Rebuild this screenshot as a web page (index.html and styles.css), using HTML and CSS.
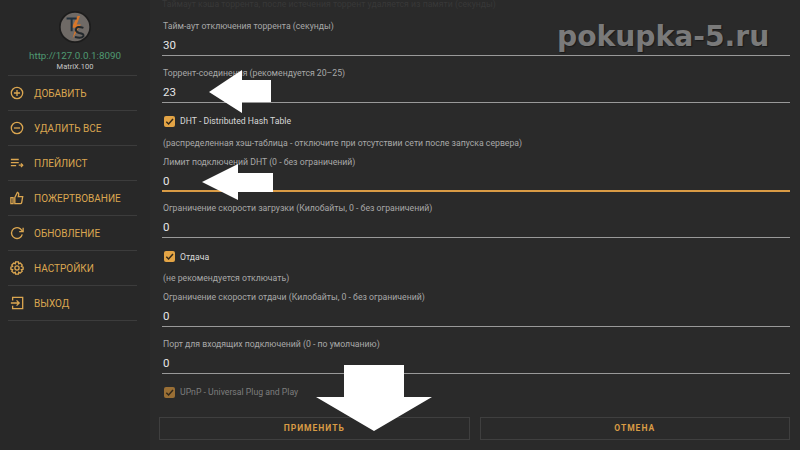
FILE: index.html
```html
<!DOCTYPE html>
<html lang="en">
<head>
    <meta charset="UTF-8">
    <meta name="viewport" content="width=device-width, initial-scale=1.0">
    <title>TorrServe</title>
    <link rel="stylesheet" href="styles.css">
</head>
<body>
    <div class="app">
        <div class="sidebar">
            <div class="logo">
                <svg width="32" height="32" viewBox="0 0 38 38">
                    <circle cx="19" cy="19" r="18" fill="#6f6a66" stroke="#1c1c1c" stroke-width="2"/>
                    <path d="M22 6 L15 20 L20 20 L16 33 L26 16 L21 16 L25 6 Z" fill="#d9772a"/>
                    <path d="M9 9 H21 M15 9 V24" stroke="#22303c" stroke-width="2.4" fill="none"/>
                    <path d="M29 20 Q21 17 20 22 Q20 25 24 26 Q30 27 29 30 Q27 33 19 31" stroke="#22282c" stroke-width="2.4" fill="none"/>
                </svg>
            </div>
            <div class="host">http://127.0.0.1:8090</div>
            <div class="version">MatriX.100</div>
            <div class="menu">
                <div class="menu-item">
                    <svg class="icon" viewBox="0 0 16 16"><circle cx="8" cy="8" r="6.5"/><path d="M8 4.5V11.5M4.5 8H11.5"/></svg>
                    <span>ДОБАВИТЬ</span>
                </div>
                <div class="menu-item">
                    <svg class="icon" viewBox="0 0 16 16"><circle cx="8" cy="8" r="6.5"/><path d="M4.5 8H11.5"/></svg>
                    <span>УДАЛИТЬ ВСЕ</span>
                </div>
                <div class="menu-item">
                    <svg class="icon" viewBox="0 0 16 16"><path d="M1 4H10M1 7.5H10M1 11H7M10 10.5H14.5"/><path d="M12.5 8.5L14.5 10.5L12.5 12.5"/></svg>
                    <span>ПЛЕЙЛИСТ</span>
                </div>
                <div class="menu-item">
                    <svg class="icon" viewBox="0 0 16 16"><path d="M1 7.5H3.5V14.5H1Z"/><path d="M5.5 7.5L8.5 1.5Q10.3 1.8 10 4L9.5 6.5H14.5L13.3 13.5Q13 14.5 12 14.5H5.5Z"/></svg>
                    <span>ПОЖЕРТВОВАНИЕ</span>
                </div>
                <div class="menu-item">
                    <svg class="icon" viewBox="0 0 16 16"><path d="M14 9.5A6.2 6.2 0 1 1 11.5 3L14.5 6"/><path d="M15 2V6.5H10.5"/></svg>
                    <span>ОБНОВЛЕНИЕ</span>
                </div>
                <div class="menu-item">
                    <svg class="icon" viewBox="0 0 16 16"><circle cx="8" cy="8" r="2.4"/><path d="M6.4 1H9.6L10 3.2L11.8 2.3L14 4.6L13 6.3L15 7V9.3L13 9.9L14 11.6L11.8 13.8L10 12.9L9.6 15H6.4L6 12.9L4.2 13.8L2 11.6L3 9.9L1 9.3V7L3 6.3L2 4.6L4.2 2.3L6 3.2Z"/></svg>
                    <span>НАСТРОЙКИ</span>
                </div>
                <div class="menu-item">
                    <svg class="icon" viewBox="0 0 16 16"><path d="M3 5V1.5H14.5V14.5H3V11"/><path d="M1 8H10M7.5 5L10.5 8L7.5 11"/></svg>
                    <span>ВЫХОД</span>
                </div>
            </div>
        </div>

        <div class="main">
            <div class="cut-off">Таймаут кэша торрента, после истечения торрент удаляется из памяти (секунды)</div>

            <div class="field">
                <label>Тайм-аут отключения торрента (секунды)</label>
                <div class="value">30</div>
            </div>
            <div class="field">
                <label>Торрент-соединения (рекомендуется 20–25)</label>
                <div class="value">23</div>
            </div>
            <div class="check">
                <span class="box"><svg viewBox="0 0 12 12"><path d="M2.5 6.2L5 8.7L9.8 3.2"/></svg></span>
                <span>DHT - Distributed Hash Table</span>
            </div>
            <div class="note">(распределенная хэш-таблица - отключите при отсутствии сети после запуска сервера)</div>
            <div class="field">
                <label>Лимит подключений DHT (0 - без ограничений)</label>
                <div class="value focused">0</div>
            </div>
            <div class="field">
                <label>Ограничение скорости загрузки (Килобайты, 0 - без ограничений)</label>
                <div class="value">0</div>
            </div>
            <div class="check">
                <span class="box"><svg viewBox="0 0 12 12"><path d="M2.5 6.2L5 8.7L9.8 3.2"/></svg></span>
                <span>Отдача</span>
            </div>
            <div class="note">(не рекомендуется отключать)</div>
            <div class="field">
                <label>Ограничение скорости отдачи (Килобайты, 0 - без ограничений)</label>
                <div class="value">0</div>
            </div>
            <div class="field">
                <label>Порт для входящих подключений (0 - по умолчанию)</label>
                <div class="value">0</div>
            </div>
            <div class="check disabled">
                <span class="box"><svg viewBox="0 0 12 12"><path d="M2.5 6.2L5 8.7L9.8 3.2"/></svg></span>
                <span>UPnP - Universal Plug and Play</span>
            </div>

            <div class="buttons">
                <button>ПРИМЕНИТЬ</button>
                <button>ОТМЕНА</button>
            </div>
        </div>
    </div>

    <!-- site watermark and arrows pasted over the screenshot -->
    <div class="watermark">pokupka-5.ru</div>
    <svg class="arrows" width="800" height="450" viewBox="0 0 800 450">
        <path d="M209 92 L242 70 V80 L271 80 V102 L242 102 V113 Z"/>
        <path d="M202 182 L238 164 V173 L273 173 V192 L238 192 V200 Z"/>
        <path d="M344 365 H404 V397 L432 397 L374 431 L316 397 H344 Z"/>
    </svg>
</body>
</html>
```

FILE: styles.css
```css
body {
    margin: 0;
    width: 800px;
    height: 450px;
    overflow: hidden;
    background-color: #2a2a2a;
    font-family: Roboto, "Liberation Sans", sans-serif;
}

.app {
    display: flex;
    height: 450px;
}

.sidebar {
    width: 150px;
    flex-shrink: 0;
    display: flex;
    flex-direction: column;
    align-items: center;
    padding-top: 11px;
    background-color: #282828;
}

.logo {
    height: 32px;
}

.host {
    margin-top: 6px;
    font-size: 9.8px;
    line-height: 14px;
    color: #4f9a72;
}

.version {
    font-size: 7.5px;
    line-height: 11px;
    margin-top: -2px;
    color: #c9c9c9;
}

.menu {
    align-self: flex-start;
    width: 129px;
    margin-top: 3px;
    margin-left: 8px;
    border-bottom: 1px solid #3c3c3c;
}

.menu-item {
    display: flex;
    align-items: center;
    height: 34px;
    border-top: 1px solid #3c3c3c;
    font-size: 10px;
    color: #dba650;
}

.icon {
    width: 14px;
    height: 14px;
    margin-left: 2px;
    margin-right: 10px;
    fill: none;
    stroke: #dba650;
    stroke-width: 1.5;
}

.main {
    flex: 1;
    padding: 0 10px 0 12px;
    display: flex;
    flex-direction: column;
}

.cut-off {
    height: 9px;
    overflow: hidden;
    font-size: 8.7px;
    line-height: 8px;
    color: #383838;
    margin-bottom: 12px;
}

.field {
    margin-bottom: 11.5px;
}

.field label {
    display: block;
    font-size: 8.7px;
    line-height: 11px;
    padding-left: 1px;
    color: #a8a8a8;
}

.value {
    height: 22px;
    line-height: 25px;
    margin-top: 1px;
    font-size: 11.5px;
    padding-left: 1px;
    color: #e6e6e6;
    border-bottom: 1px solid #999;
}

.focused {
    height: 21px;
    border-bottom: 2px solid #d99b45;
}

.check {
    display: flex;
    align-items: center;
    height: 13px;
    margin-top: 0.5px;
    font-size: 8.7px;
    color: #d8d8d8;
    padding-left: 2px;
}

.box {
    width: 11px;
    height: 11px;
    margin-right: 5px;
    border-radius: 2px;
    background-color: #e3a445;
}

.box svg {
    display: block;
    fill: none;
    stroke: #33291a;
    stroke-width: 1.6;
}

.disabled {
    color: #7d7d7d;
}

.disabled .box {
    background-color: #9a6f35;
}

.note {
    margin-top: 10px;
    margin-bottom: 8px;
    font-size: 8.7px;
    line-height: 11px;
    padding-left: 1px;
    color: #a8a8a8;
}

.buttons {
    display: flex;
    gap: 10px;
    margin-top: 18px;
    margin-left: -3px;
}

.buttons button {
    flex: 1;
    height: 23px;
    padding: 0;
    background: none;
    border: 1px solid #3f3f3f;
    font-family: inherit;
    font-size: 8.5px;
    font-weight: 700;
    letter-spacing: 1px;
    color: #d99b45;
}

.watermark {
    position: absolute;
    left: 557px;
    top: 19px;
    font-family: "DejaVu Sans", sans-serif;
    font-size: 28.2px;
    font-weight: 700;
    line-height: 36px;
    color: #7a7a7a;
    text-shadow: 1px 1px 1px #1a1a1a;
}

.arrows {
    position: absolute;
    left: 0;
    top: 0;
    fill: #fff;
}
```
